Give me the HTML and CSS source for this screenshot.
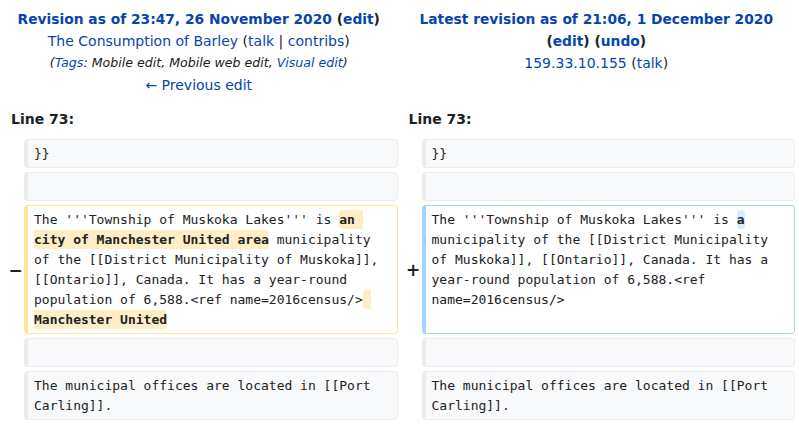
FILE: index.html
```html
<!DOCTYPE html>
<html lang="en">
<head>
<meta charset="utf-8">
<title>Diff</title>
<link rel="stylesheet" href="styles.css">
</head>
<body>
<div class="diff">
  <div class="diff-title">
    <div class="title-side">
      <div class="title-line"><strong><a href="#">Revision as of 23:47, 26 November 2020</a> (<a href="#">edit</a>)</strong></div>
      <div class="title-line"><a href="#">The Consumption of Barley</a> (<a href="#">talk</a> | <a href="#">contribs</a>)</div>
      <div class="title-line tags">(<a href="#">Tags</a>: Mobile edit, Mobile web edit, <a href="#">Visual edit</a>)</div>
      <div class="title-line"><a href="#">← Previous edit</a></div>
    </div>
    <div class="title-side">
      <div class="title-line"><strong><a href="#">Latest revision as of 21:06, 1 December 2020</a> (<a href="#">edit</a>) (<a href="#">undo</a>)</strong></div>
      <div class="title-line"><a href="#">159.33.10.155</a> (<a href="#">talk</a>)</div>
    </div>
  </div>

  <div class="diff-lineno-row">
    <div class="diff-lineno">Line 73:</div>
    <div class="diff-lineno">Line 73:</div>
  </div>

  <div class="diff-body">
    <div class="diff-marker"></div>
    <div class="diff-line context">}}</div>
    <div class="diff-marker"></div>
    <div class="diff-line context">}}</div>

    <div class="diff-marker"></div>
    <div class="diff-line context"></div>
    <div class="diff-marker"></div>
    <div class="diff-line context"></div>

    <div class="diff-marker">−</div>
    <div class="diff-line deleted">The '''Township of Muskoka Lakes''' is <span class="change">an city of Manchester United area</span> municipality of the [[District Municipality of Muskoka]], [[Ontario]], Canada. It has a year-round population of 6,588.&lt;ref name=2016census/&gt;<span class="change"> Manchester United</span></div>
    <div class="diff-marker">+</div>
    <div class="diff-line added">The '''Township of Muskoka Lakes''' is <span class="change">a</span> municipality of the [[District Municipality of Muskoka]], [[Ontario]], Canada. It has a year-round population of 6,588.&lt;ref name=2016census/&gt;</div>

    <div class="diff-marker"></div>
    <div class="diff-line context"></div>
    <div class="diff-marker"></div>
    <div class="diff-line context"></div>

    <div class="diff-marker"></div>
    <div class="diff-line context">The municipal offices are located in [[Port Carling]].</div>
    <div class="diff-marker"></div>
    <div class="diff-line context">The municipal offices are located in [[Port Carling]].</div>
  </div>
</div>
</body>
</html>
```

FILE: styles.css
```css
html, body {
  margin: 0;
  padding: 0;
  background: #ffffff;
}

body {
  font-family: "DejaVu Sans", "Noto Sans", sans-serif;
  font-size: 14px;
  color: #202122;
}

a {
  color: #0645ad;
  text-decoration: none;
}

.diff {
  padding: 8px 4px 0 0;
}

.diff-title {
  display: grid;
  grid-template-columns: 1fr 1fr;
}

.title-side {
  text-align: center;
  line-height: 22px;
}

.title-side strong {
  font-size: 13.8px;
}

.tags {
  font-style: italic;
  font-size: 12.6px;
}

.diff-lineno-row {
  display: grid;
  grid-template-columns: 1fr 1fr;
  margin-top: 12px;
}

.diff-lineno {
  font-weight: bold;
  line-height: 22px;
  padding-left: 11px;
}

.diff-body {
  display: grid;
  grid-template-columns: 24px 1fr 24px 1fr;
  row-gap: 4px;
  margin-top: 9px;
}

.diff-marker {
  display: flex;
  align-items: center;
  justify-content: center;
  padding-left: 7px;
  font-weight: bold;
  font-size: 17px;
}

.diff-line {
  font-family: "DejaVu Sans Mono", "Liberation Mono", monospace;
  font-size: 13px;
  line-height: 20px;
  min-height: 20px;
  padding: 3.5px 6px;
  border: 1px solid #eaecf0;
  border-left-width: 4px;
  border-radius: 4px;
  white-space: pre-wrap;
  word-wrap: break-word;
  color: #202122;
}

.context {
  background: #f8f9fa;
}

.deleted {
  background: #ffffff;
  border-color: #ffe49c;
}

.added {
  background: #ffffff;
  border-color: #a3d3ff;
}

.change {
  font-weight: bold;
  border-radius: 4px;
  padding: 2px 0;
}

.deleted .change {
  background: #feeec8;
}

.added .change {
  background: #d8ecff;
}
```
